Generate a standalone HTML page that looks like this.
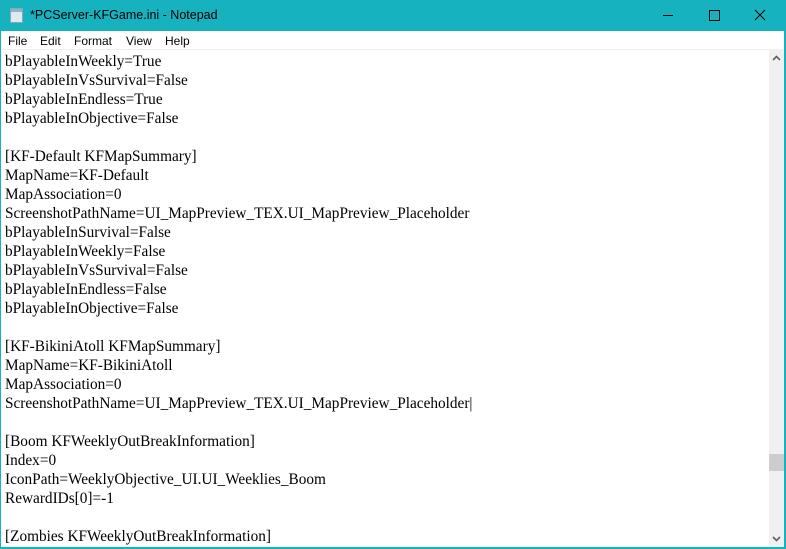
<!DOCTYPE html>
<html><head><meta charset="utf-8"><style>
*{margin:0;padding:0;box-sizing:border-box}
body{width:786px;height:549px;overflow:hidden;background:#17b2bf;position:relative;font-family:"Liberation Sans",sans-serif}
#title{position:absolute;left:0;top:0;width:786px;height:31px;background:#17b2bf;color:#000;font-size:12.5px}
#title .t{position:absolute;left:30px;top:8px}
#icon{position:absolute;left:10px;top:8px;width:13px;height:15px;background:#dfe9ef;border:1px solid #8aa;}
#icon:before{content:"";position:absolute;left:0;top:0;width:11px;height:3px;background:#8fb3cc}
.cb{position:absolute;top:0;width:46px;height:31px}
#menu{position:absolute;left:1px;top:31px;width:783px;height:19px;background:#fff;font-size:12px;border-bottom:1px solid #f0f0f0}
#menu span{position:absolute;top:3px}
#edit{position:absolute;left:1px;top:50px;width:768px;height:497px;background:#fff;overflow:hidden}
#edit pre{font-family:"Liberation Serif",serif;font-size:15.3px;line-height:19px;position:absolute;left:4px;top:2px;color:#000}
#sb{position:absolute;left:769px;top:50px;width:15px;height:497px;background:#f0f0f0}
#thumb{position:absolute;left:0;top:404px;width:15px;height:17px;background:#cdcdcd}
</style></head><body>
<div id="title"><div id="icon"></div><span class="t">*PCServer-KFGame.ini - Notepad</span>
<svg class="cb" style="left:645px" width="46" height="31"><line x1="18" y1="15.5" x2="28" y2="15.5" stroke="#000"/></svg>
<svg class="cb" style="left:691px" width="46" height="31"><rect x="18.5" y="10.5" width="10" height="10" fill="none" stroke="#000"/></svg>
<svg class="cb" style="left:737px" width="46" height="31"><path d="M18 10L28 20M28 10L18 20" stroke="#000"/></svg>
</div>
<div id="menu"><span style="left:7px">File</span><span style="left:39px">Edit</span><span style="left:73px">Format</span><span style="left:125px">View</span><span style="left:164px">Help</span></div>
<div id="edit"><pre>bPlayableInWeekly=True
bPlayableInVsSurvival=False
bPlayableInEndless=True
bPlayableInObjective=False

[KF-Default KFMapSummary]
MapName=KF-Default
MapAssociation=0
ScreenshotPathName=UI_MapPreview_TEX.UI_MapPreview_Placeholder
bPlayableInSurvival=False
bPlayableInWeekly=False
bPlayableInVsSurvival=False
bPlayableInEndless=False
bPlayableInObjective=False

[KF-BikiniAtoll KFMapSummary]
MapName=KF-BikiniAtoll
MapAssociation=0
ScreenshotPathName=UI_MapPreview_TEX.UI_MapPreview_Placeholder|

[Boom KFWeeklyOutBreakInformation]
Index=0
IconPath=WeeklyObjective_UI.UI_Weeklies_Boom
RewardIDs[0]=-1

[Zombies KFWeeklyOutBreakInformation]</pre></div>
<div id="sb">
<svg style="position:absolute;left:0;top:0" width="15" height="17"><path d="M4 10L7.5 6.5L11 10" stroke="#606060" stroke-width="1.6" fill="none"/></svg>
<div id="thumb"></div>
<svg style="position:absolute;left:0;top:480px" width="15" height="17"><path d="M4 7L7.5 10.5L11 7" stroke="#606060" stroke-width="1.6" fill="none"/></svg>
</div>
</body></html>
